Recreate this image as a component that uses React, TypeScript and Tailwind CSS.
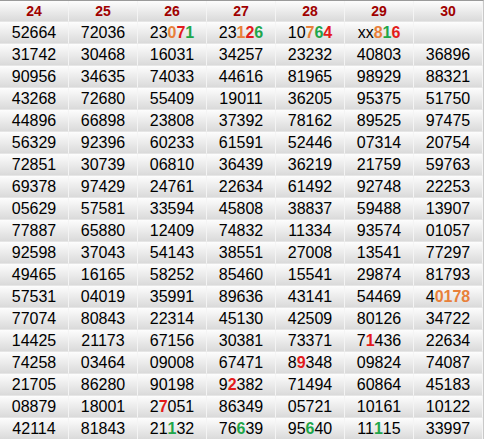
const cols = ['24', '25', '26', '27', '28', '29', '30']

type Part = string | [string, 'o' | 'r' | 'g']

const O = (s: string): Part => [s, 'o']
const R = (s: string): Part => [s, 'r']
const G = (s: string): Part => [s, 'g']

const rows: Part[][][] = [
  [['52664'], ['72036'], ['23', O('0'), R('7'), G('1')], ['23', O('1'), R('2'), G('6')], ['10', O('7'), G('6'), R('4')], ['xx', O('8'), G('1'), R('6')], []],
  [['31742'], ['30468'], ['16031'], ['34257'], ['23232'], ['40803'], ['36896']],
  [['90956'], ['34635'], ['74033'], ['44616'], ['81965'], ['98929'], ['88321']],
  [['43268'], ['72680'], ['55409'], ['19011'], ['36205'], ['95375'], ['51750']],
  [['44896'], ['66898'], ['23808'], ['37392'], ['78162'], ['89525'], ['97475']],
  [['56329'], ['92396'], ['60233'], ['61591'], ['52446'], ['07314'], ['20754']],
  [['72851'], ['30739'], ['06810'], ['36439'], ['36219'], ['21759'], ['59763']],
  [['69378'], ['97429'], ['24761'], ['22634'], ['61492'], ['92748'], ['22253']],
  [['05629'], ['57581'], ['33594'], ['45808'], ['38837'], ['59488'], ['13907']],
  [['77887'], ['65880'], ['12409'], ['74832'], ['11334'], ['93574'], ['01057']],
  [['92598'], ['37043'], ['54143'], ['38551'], ['27008'], ['13541'], ['77297']],
  [['49465'], ['16165'], ['58252'], ['85460'], ['15541'], ['29874'], ['81793']],
  [['57531'], ['04019'], ['35991'], ['89636'], ['43141'], ['54469'], ['4', O('0178')]],
  [['77074'], ['80843'], ['22314'], ['45130'], ['42509'], ['80126'], ['34722']],
  [['14425'], ['21173'], ['67156'], ['30381'], ['73371'], ['7', R('1'), '436'], ['22634']],
  [['74258'], ['03464'], ['09008'], ['67471'], ['8', R('9'), '348'], ['09824'], ['74087']],
  [['21705'], ['86280'], ['90198'], ['9', R('2'), '382'], ['71494'], ['60864'], ['45183']],
  [['08879'], ['18001'], ['2', R('7'), '051'], ['86349'], ['05721'], ['10161'], ['10122']],
  [['42114'], ['81843'], ['21', G('1'), '32'], ['76', G('6'), '39'], ['95', G('6'), '40'], ['11', G('1'), '15'], ['33997']],
]

const tone = {
  o: 'text-[#e8803a]',
  r: 'text-[#e31b1b]',
  g: 'text-[#1fa64a]',
}

function Cell({ parts }: { parts: Part[] }) {
  return (
    <div className="h-[22px] flex items-center justify-center border-r border-b border-r-[#f4f4f4] border-b-[#e6e6e6] bg-gradient-to-b from-[#fdfdfd] to-[#dadada] text-[16px] leading-none text-black">
      {parts.map((p, i) =>
        typeof p === 'string' ? (
          <span key={i}>{p}</span>
        ) : (
          <span key={i} className={`font-bold ${tone[p[1]]}`}>{p[0]}</span>
        )
      )}
    </div>
  )
}

export default function App() {
  return (
    <div className="w-[486px] h-[439px] bg-white overflow-hidden" style={{ fontFamily: '"Liberation Sans", Arial, sans-serif' }}>
      <div className="w-[484px] grid grid-cols-[repeat(7,69px)] border-t border-[#9a9a9a] border-r border-r-[#c8c8c8]">
        {cols.map(c => (
          <div
            key={c}
            className="h-[21px] flex items-center justify-center border-r border-b border-r-[#f4f4f4] border-b-[#e6e6e6] bg-gradient-to-b from-[#fdfdfd] to-[#dadada] text-[14px] font-bold text-[#a00000]"
          >
            {c}
          </div>
        ))}
        {rows.map((row, r) =>
          row.map((parts, c) => <Cell key={`${r}-${c}`} parts={parts} />)
        )}
      </div>
    </div>
  )
}
